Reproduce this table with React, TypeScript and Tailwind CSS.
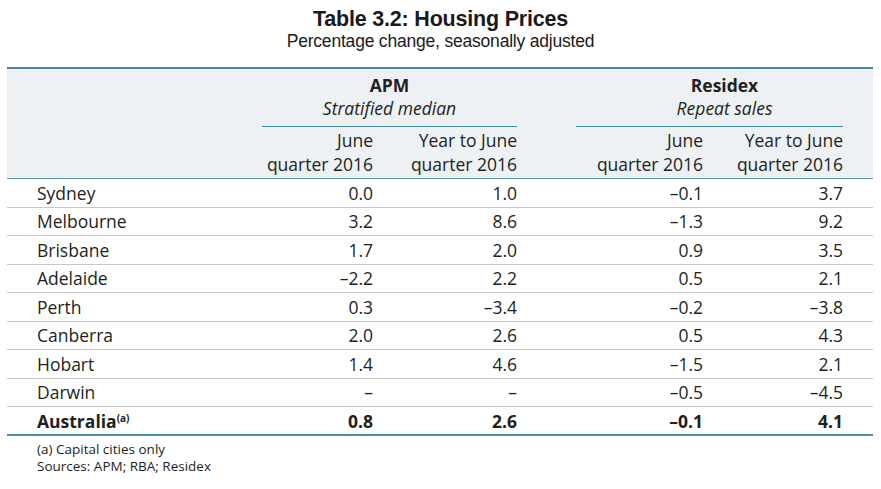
const rows: [string, string, string, string, string][] = [
  ['Sydney', '0.0', '1.0', '–0.1', '3.7'],
  ['Melbourne', '3.2', '8.6', '–1.3', '9.2'],
  ['Brisbane', '1.7', '2.0', '0.9', '3.5'],
  ['Adelaide', '–2.2', '2.2', '0.5', '2.1'],
  ['Perth', '0.3', '–3.4', '–0.2', '–3.8'],
  ['Canberra', '2.0', '2.6', '0.5', '4.3'],
  ['Hobart', '1.4', '4.6', '–1.5', '2.1'],
  ['Darwin', '–', '–', '–0.5', '–4.5'],
]

/* 7 columns: label | APM x2 | gap | Residex x2 | right pad */
const cols = 'grid grid-cols-[255px_111px_144px_59px_127px_140px_30px]'

export default function App() {
  return (
    <div className="w-[881px] h-[489px] bg-white text-[#231f20] font-['Open_Sans','Noto_Sans',sans-serif]">
      {/* title */}
      <div className="pt-[7px] text-center font-['Liberation_Sans',Arial,sans-serif] text-[#1a1a1a]">
        <div className="text-[21.5px] leading-[24px] font-bold tracking-[-0.2px]">Table 3.2: Housing Prices</div>
        <div className="text-[17.5px] leading-[20px] tracking-[-0.2px]">Percentage change, seasonally adjusted</div>
      </div>

      <div className="ml-[7px] mt-[16px] w-[866px] text-[17.5px]">
        {/* header */}
        <div className="bg-[#edf1f4] border-t-2 border-[#4a8a9c]">
          <div className={`${cols} pt-[5px] leading-[23px]`}>
            <div />
            <div className="col-span-2 flex flex-col">
              <div className="text-center font-bold">APM</div>
              <div className="text-center italic">Stratified median</div>
              <div className="mt-[6px] border-b border-[#3f8a9e]" />
            </div>
            <div />
            <div className="col-span-3 flex flex-col">
              <div className="text-center font-bold">Residex</div>
              <div className="text-center italic">Repeat sales</div>
              <div className="mt-[6px] mr-[30px] border-b border-[#3f8a9e]" />
            </div>
          </div>
          <div className={`${cols} pt-px pb-[2px] leading-[24px] border-b border-[#5c9aab]`}>
            <div />
            <div className="text-right">June<br />quarter 2016</div>
            <div className="text-right">Year to June<br />quarter 2016</div>
            <div />
            <div className="text-right">June<br />quarter 2016</div>
            <div className="text-right">Year to June<br />quarter 2016</div>
            <div />
          </div>
        </div>

        {/* body */}
        {rows.map(([city, a, b, c, d]) => (
          <div key={city} className={`${cols} h-[28.5px] items-center leading-[24px] border-b border-[#c8c8c8]`}>
            <div className="pl-[30px]">{city}</div>
            <div className="text-right">{a}</div>
            <div className="text-right">{b}</div>
            <div />
            <div className="text-right">{c}</div>
            <div className="text-right">{d}</div>
            <div />
          </div>
        ))}
        <div className={`${cols} h-[29px] items-center leading-[24px] font-bold border-b-2 border-[#4b93a6]`}>
          <div className="pl-[30px]">
            Australia<span className="relative -top-[6px] text-[10px] leading-none">(a)</span>
          </div>
          <div className="text-right">0.8</div>
          <div className="text-right">2.6</div>
          <div />
          <div className="text-right">–0.1</div>
          <div className="text-right">4.1</div>
          <div />
        </div>

        {/* notes */}
        <div className="pt-[5px] pl-[30px] text-[13.5px] leading-[17px]">
          <div>(a) Capital cities only</div>
          <div>Sources: APM; RBA; Residex</div>
        </div>
      </div>
    </div>
  )
}
